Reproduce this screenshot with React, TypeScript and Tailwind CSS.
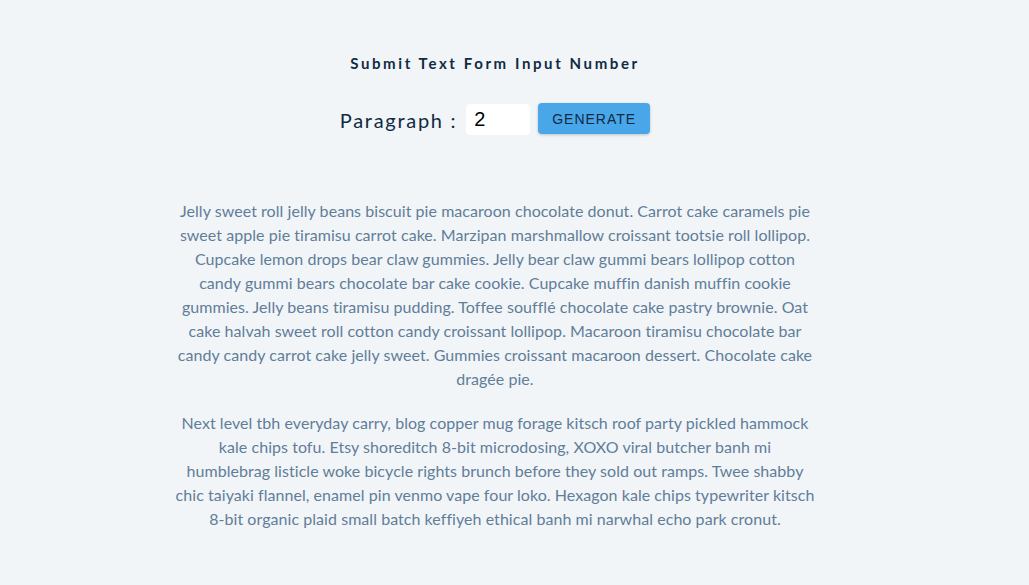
import { Fragment, useState } from "react";

// line breaks follow the original render
const paragraphs: string[][] = [
  [
    "Jelly sweet roll jelly beans biscuit pie macaroon chocolate donut. Carrot cake caramels pie",
    "sweet apple pie tiramisu carrot cake. Marzipan marshmallow croissant tootsie roll lollipop.",
    "Cupcake lemon drops bear claw gummies. Jelly bear claw gummi bears lollipop cotton",
    "candy gummi bears chocolate bar cake cookie. Cupcake muffin danish muffin cookie",
    "gummies. Jelly beans tiramisu pudding. Toffee soufflé chocolate cake pastry brownie. Oat",
    "cake halvah sweet roll cotton candy croissant lollipop. Macaroon tiramisu chocolate bar",
    "candy candy carrot cake jelly sweet. Gummies croissant macaroon dessert. Chocolate cake",
    "dragée pie.",
  ],
  [
    "Next level tbh everyday carry, blog copper mug forage kitsch roof party pickled hammock",
    "kale chips tofu. Etsy shoreditch 8-bit microdosing, XOXO viral butcher banh mi",
    "humblebrag listicle woke bicycle rights brunch before they sold out ramps. Twee shabby",
    "chic taiyaki flannel, enamel pin venmo vape four loko. Hexagon kale chips typewriter kitsch",
    "8-bit organic plaid small batch keffiyeh ethical banh mi narwhal echo park cronut.",
  ],
];

export default function App() {
  const [count, setCount] = useState<number>(2);

  return (
    <div className="min-h-[585px] w-full bg-[#f1f5f8] font-['Lato','Open_Sans',sans-serif]">
      <div className="flex justify-center pr-[39px]">
        <section className="w-[700px] pt-[54px] flex flex-col items-center">
          <h3 className="text-[15px] font-bold tracking-[2.6px] text-[#102a42] leading-[18px]">
            Submit Text Form Input Number
          </h3>

          <form
            className="mt-[31px] flex items-center"
            onSubmit={(e) => e.preventDefault()}
          >
            <label
              htmlFor="amount"
              className="text-[20px] tracking-[1.7px] text-[#102a42] mr-[9px]"
            >
              Paragraph :
            </label>
            <input
              id="amount"
              type="number"
              value={count}
              onChange={(e) => setCount(Number(e.target.value))}
              className="w-[64px] h-[31px] bg-white rounded-[4px] px-2 text-[20px] text-black font-['Liberation_Sans',sans-serif] outline-none [appearance:textfield]"
            />
            <button
              type="submit"
              className="ml-[8px] w-[112px] h-[31px] mb-[2px] pt-[1px] bg-[#49a6e9] rounded-[4px] shadow-[0_1px_3px_rgba(0,0,0,0.2)] text-[14px] tracking-[1px] text-[#102a42] font-['Liberation_Sans',sans-serif]"
            >
              GENERATE
            </button>
          </form>

          <article className="mt-[63px] flex flex-col gap-[20px]">
            {paragraphs.slice(0, count).map((lines, index) => (
              <p
                key={index}
                className="text-center text-[16px] leading-[24px] tracking-[0.05px] text-[#617d98] whitespace-nowrap"
              >
                {lines.map((line, i) => (
                  <Fragment key={i}>
                    {line}
                    {i < lines.length - 1 && <br />}
                  </Fragment>
                ))}
              </p>
            ))}
          </article>
        </section>
      </div>
    </div>
  );
}
